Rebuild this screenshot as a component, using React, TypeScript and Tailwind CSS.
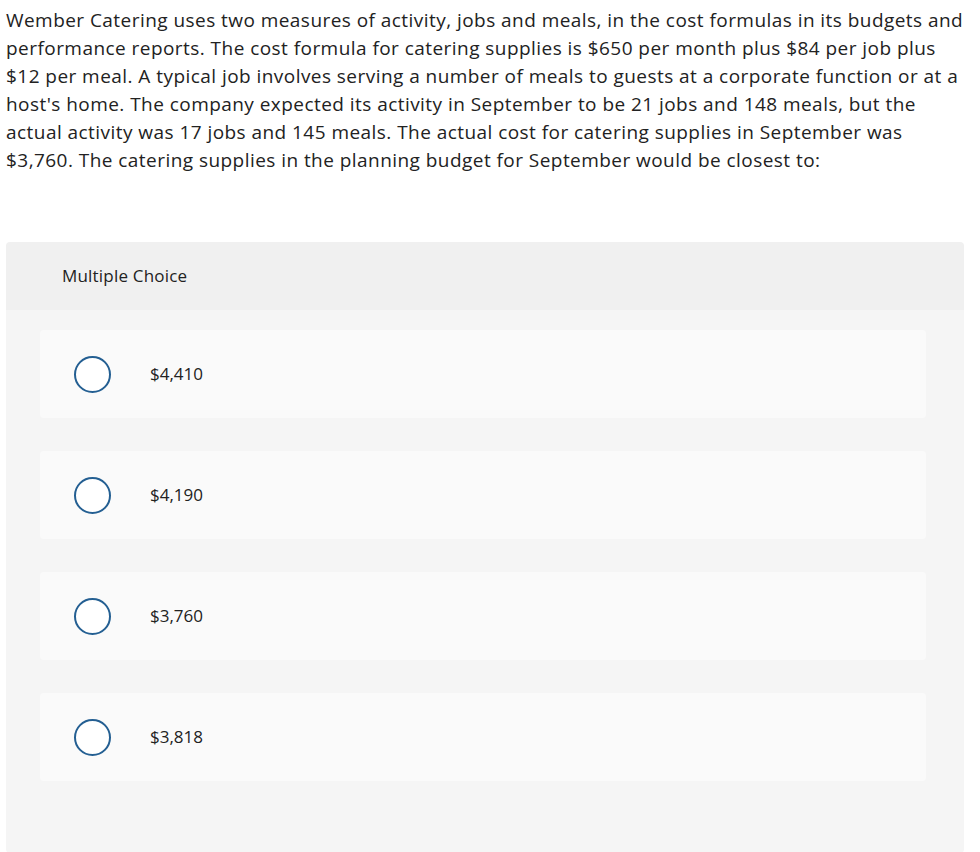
export default function App() {
  const options = ["$4,410", "$4,190", "$3,760", "$3,818"];

  return (
    <div className="min-h-[852px] bg-white text-[#222222]" style={{ fontFamily: '"Open Sans", "Liberation Sans", sans-serif' }}>
      <p className="px-[6px] pt-[6px] text-[19px] leading-[28px] tracking-[0.45px]">
        Wember Catering uses two measures of activity, jobs and meals, in the cost formulas in its budgets and
        <br />
        performance reports. The cost formula for catering supplies is $650 per month plus $84 per job plus
        <br />
        $12 per meal. A typical job involves serving a number of meals to guests at a corporate function or at a
        <br />
        host's home. The company expected its activity in September to be 21 jobs and 148 meals, but the
        <br />
        actual activity was 17 jobs and 145 meals. The actual cost for catering supplies in September was
        <br />
        $3,760. The catering supplies in the planning budget for September would be closest to:
      </p>

      <div className="ml-[6px] mt-[68px] w-[958px] overflow-hidden rounded-[4px]">
        <div className="flex h-[68px] items-center bg-[#f0f0f0] pl-[56px] text-[17px] tracking-[0.2px]">Multiple Choice</div>
        <div className="flex flex-col gap-[33px] bg-[#f5f5f5] pb-[72px] pl-[34px] pt-[20px]">
          {options.map((opt) => (
            <div key={opt} className="flex h-[88px] w-[886px] items-center rounded-[4px] bg-[#fafafa]">
              <span className="ml-[34px] h-[37px] w-[37px] rounded-full border-2 border-[#245f92] bg-white" />
              <span className="ml-[39px] text-[17px]">{opt}</span>
            </div>
          ))}
        </div>
      </div>
    </div>
  );
}
